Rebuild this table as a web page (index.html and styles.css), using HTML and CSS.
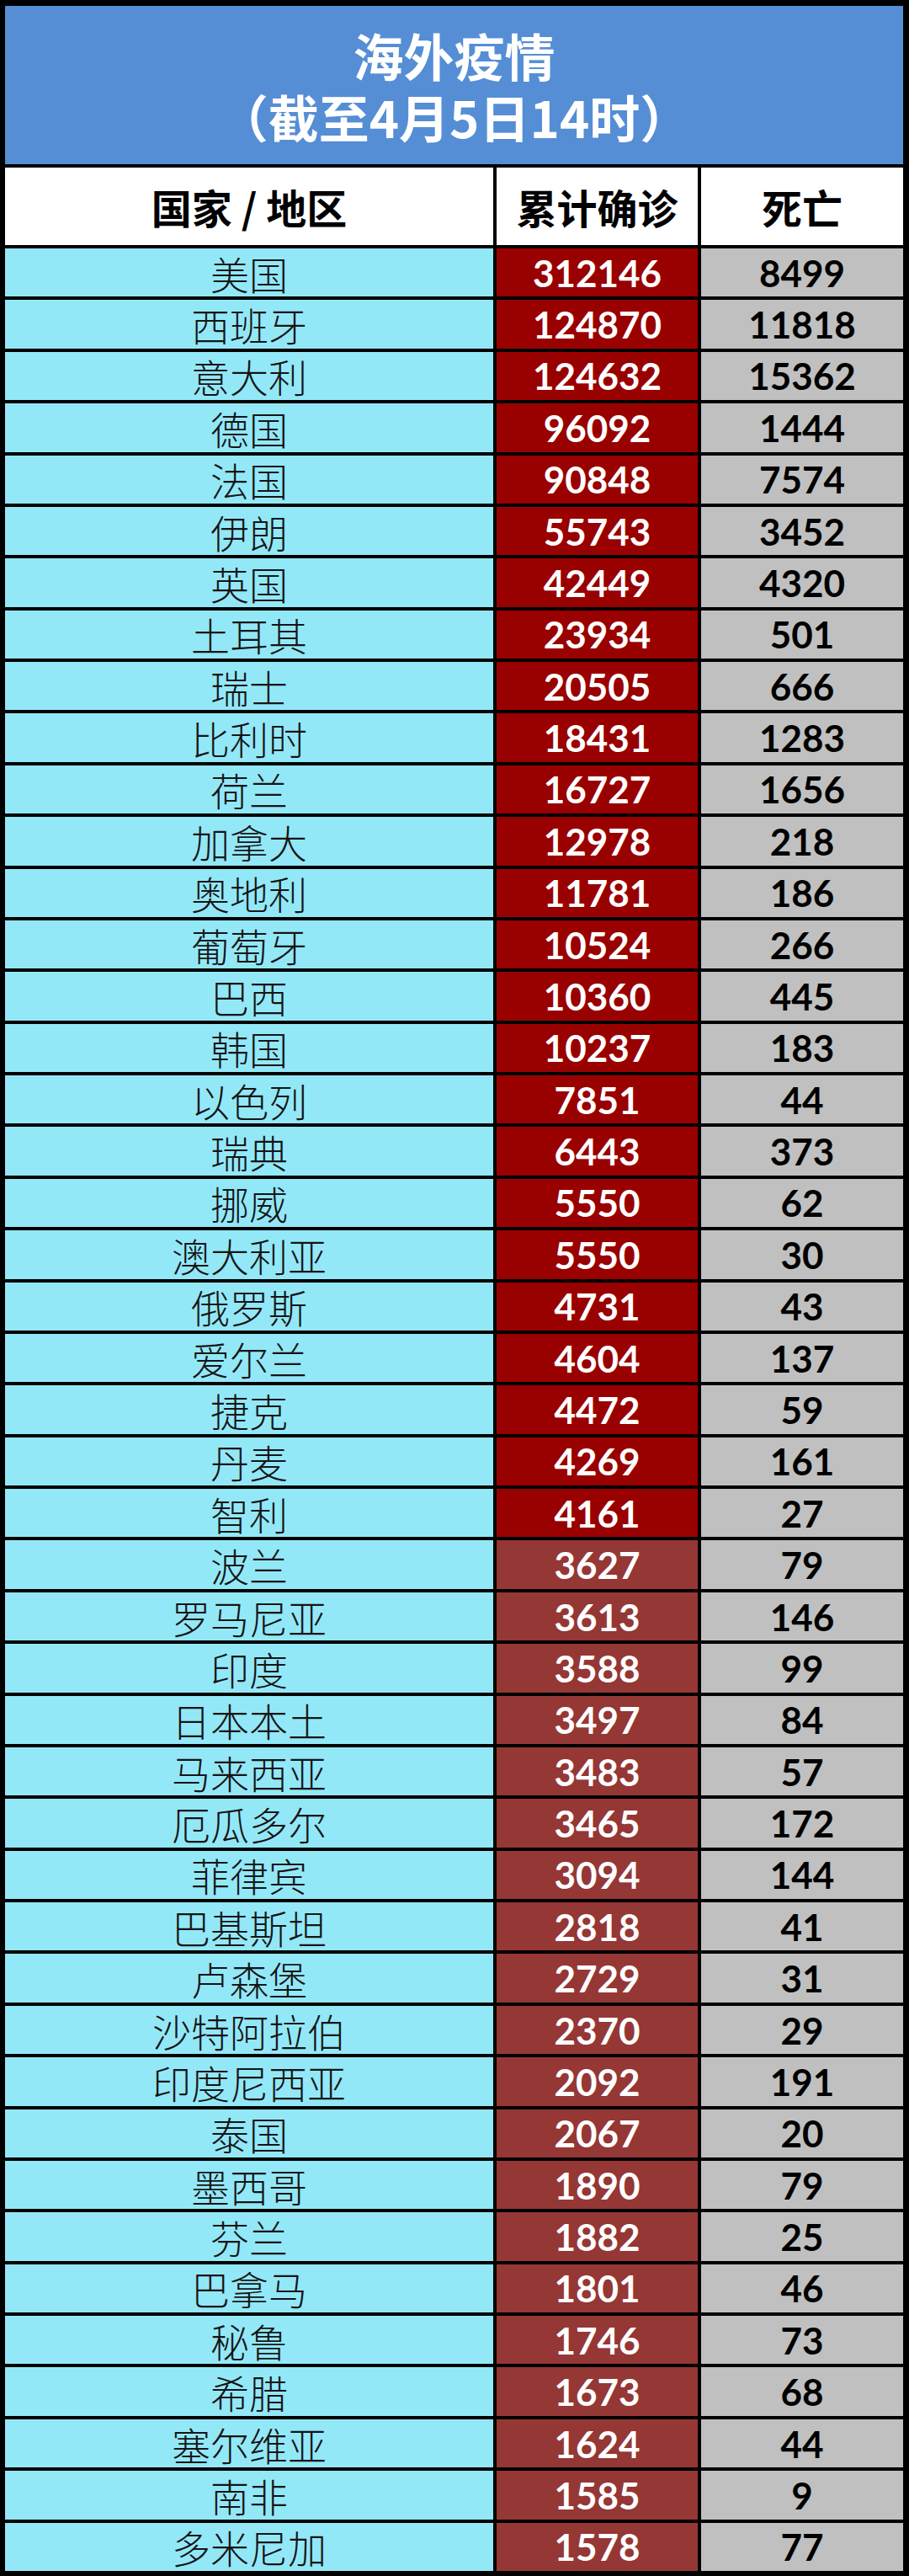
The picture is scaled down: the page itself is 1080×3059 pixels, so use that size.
FILE: index.html
```html
<!DOCTYPE html>
<html lang="zh-CN">
<head>
<meta charset="utf-8">
<title>海外疫情</title>
<link rel="stylesheet" href="styles.css">
</head>
<body>
<div class="sheet">
  <div class="title">
    <div class="title-line">海外疫情</div>
    <div class="title-line">（截至4月5日14时）</div>
  </div>
  <div class="table">
    <div class="head">国家 / 地区</div><div class="head">累计确诊</div><div class="head">死亡</div>
    <div class="name">美国</div><div class="conf">312146</div><div class="death">8499</div>
    <div class="name">西班牙</div><div class="conf">124870</div><div class="death">11818</div>
    <div class="name">意大利</div><div class="conf">124632</div><div class="death">15362</div>
    <div class="name">德国</div><div class="conf">96092</div><div class="death">1444</div>
    <div class="name">法国</div><div class="conf">90848</div><div class="death">7574</div>
    <div class="name">伊朗</div><div class="conf">55743</div><div class="death">3452</div>
    <div class="name">英国</div><div class="conf">42449</div><div class="death">4320</div>
    <div class="name">土耳其</div><div class="conf">23934</div><div class="death">501</div>
    <div class="name">瑞士</div><div class="conf">20505</div><div class="death">666</div>
    <div class="name">比利时</div><div class="conf">18431</div><div class="death">1283</div>
    <div class="name">荷兰</div><div class="conf">16727</div><div class="death">1656</div>
    <div class="name">加拿大</div><div class="conf">12978</div><div class="death">218</div>
    <div class="name">奥地利</div><div class="conf">11781</div><div class="death">186</div>
    <div class="name">葡萄牙</div><div class="conf">10524</div><div class="death">266</div>
    <div class="name">巴西</div><div class="conf">10360</div><div class="death">445</div>
    <div class="name">韩国</div><div class="conf">10237</div><div class="death">183</div>
    <div class="name">以色列</div><div class="conf">7851</div><div class="death">44</div>
    <div class="name">瑞典</div><div class="conf">6443</div><div class="death">373</div>
    <div class="name">挪威</div><div class="conf">5550</div><div class="death">62</div>
    <div class="name">澳大利亚</div><div class="conf">5550</div><div class="death">30</div>
    <div class="name">俄罗斯</div><div class="conf">4731</div><div class="death">43</div>
    <div class="name">爱尔兰</div><div class="conf">4604</div><div class="death">137</div>
    <div class="name">捷克</div><div class="conf">4472</div><div class="death">59</div>
    <div class="name">丹麦</div><div class="conf">4269</div><div class="death">161</div>
    <div class="name">智利</div><div class="conf">4161</div><div class="death">27</div>
    <div class="name">波兰</div><div class="conf lo">3627</div><div class="death">79</div>
    <div class="name">罗马尼亚</div><div class="conf lo">3613</div><div class="death">146</div>
    <div class="name">印度</div><div class="conf lo">3588</div><div class="death">99</div>
    <div class="name">日本本土</div><div class="conf lo">3497</div><div class="death">84</div>
    <div class="name">马来西亚</div><div class="conf lo">3483</div><div class="death">57</div>
    <div class="name">厄瓜多尔</div><div class="conf lo">3465</div><div class="death">172</div>
    <div class="name">菲律宾</div><div class="conf lo">3094</div><div class="death">144</div>
    <div class="name">巴基斯坦</div><div class="conf lo">2818</div><div class="death">41</div>
    <div class="name">卢森堡</div><div class="conf lo">2729</div><div class="death">31</div>
    <div class="name">沙特阿拉伯</div><div class="conf lo">2370</div><div class="death">29</div>
    <div class="name">印度尼西亚</div><div class="conf lo">2092</div><div class="death">191</div>
    <div class="name">泰国</div><div class="conf lo">2067</div><div class="death">20</div>
    <div class="name">墨西哥</div><div class="conf lo">1890</div><div class="death">79</div>
    <div class="name">芬兰</div><div class="conf lo">1882</div><div class="death">25</div>
    <div class="name">巴拿马</div><div class="conf lo">1801</div><div class="death">46</div>
    <div class="name">秘鲁</div><div class="conf lo">1746</div><div class="death">73</div>
    <div class="name">希腊</div><div class="conf lo">1673</div><div class="death">68</div>
    <div class="name">塞尔维亚</div><div class="conf lo">1624</div><div class="death">44</div>
    <div class="name">南非</div><div class="conf lo">1585</div><div class="death">9</div>
    <div class="name">多米尼加</div><div class="conf lo">1578</div><div class="death">77</div>
  </div>
</div>
</body>
</html>
```

FILE: styles.css
```css
html, body {
  margin: 0;
  padding: 0;
  background: #000;
}

.sheet {
  width: 1080px;
  height: 3059px;
  box-sizing: border-box;
  padding: 7px 7px 6px 6px;
  background: #000;
  display: flex;
  flex-direction: column;
  gap: 4px;
}

.title {
  height: 188px;
  flex: none;
  background: #558ed5;
  color: #fff;
  display: flex;
  flex-direction: column;
  align-items: center;
  justify-content: center;
  font-family: "Noto Sans CJK SC", sans-serif;
  font-weight: 700;
  font-size: 60px;
  line-height: 73px;
}

.title-line {
  white-space: nowrap;
}

.table {
  flex: 1;
  display: grid;
  grid-template-columns: 580px 239px 240px;
  grid-template-rows: 92px repeat(45, 1fr);
  gap: 4px;
}

.table > div {
  display: flex;
  align-items: center;
  justify-content: center;
  white-space: nowrap;
}

.head {
  background: #fff;
  color: #000;
  font-family: "Noto Sans CJK SC", sans-serif;
  font-weight: 700;
  font-size: 48px;
}

.name {
  background: #93e8f8;
  color: #151515;
  font-family: "Noto Sans CJK SC", sans-serif;
  font-weight: 300;
  font-size: 46px;
  line-height: 1;
}

.conf,
.death {
  font-family: Lato, "Open Sans", sans-serif;
  font-weight: 700;
  font-size: 44px;
  line-height: 1;
}

.conf {
  background: #990000;
  color: #fff;
}

.conf.lo {
  background: #953735;
}

.death {
  background: #c0c0c0;
  color: #000;
}
```
